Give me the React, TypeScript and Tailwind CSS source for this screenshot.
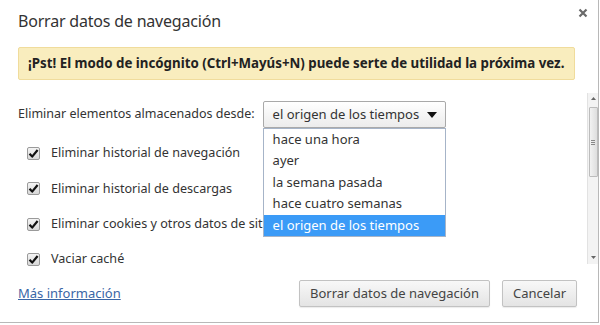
import React from 'react';

const options = ['hace una hora', 'ayer', 'la semana pasada', 'hace cuatro semanas', 'el origen de los tiempos'];

const items = [
  'Eliminar historial de navegación',
  'Eliminar historial de descargas',
  'Eliminar cookies y otros datos de sitios y complementos',
  'Vaciar caché',
];

const CheckBox: React.FC = () => (
  <span className="flex h-[13px] w-[13px] items-center justify-center rounded-[2px] border border-[#9a9a9a] bg-gradient-to-b from-[#f4f4f4] to-[#d8d8d8]">
    <svg width="11" height="11" viewBox="0 0 11 11">
      <path d="M1.5 5.8 L4.2 8.6 L9.6 2" fill="none" stroke="#111" strokeWidth="2.2" strokeLinejoin="round" />
    </svg>
  </span>
);

const App: React.FC = () => {
  return (
    <div className="h-[325px] w-[600px] overflow-hidden bg-white text-[#333] [font-family:'Noto_Sans',sans-serif]">
      <div className="flex h-[323px] w-[599px] flex-col border-r border-b border-[#b8b8b8]">
        <div className="flex items-start justify-between pt-[8px] pl-[18px] pr-[10px]">
          <h1 className="text-[16px] leading-[26px] tracking-[-0.2px] text-[#333]">Borrar datos de navegación</h1>
          <svg width="10" height="10" viewBox="0 0 10 10">
            <path d="M1.5 1.5 L8.5 8.5 M8.5 1.5 L1.5 8.5" stroke="#6a6a6a" strokeWidth="2.2" />
          </svg>
        </div>

        <div className="mx-[18px] mt-[13px] flex h-[33px] w-[557px] items-center whitespace-nowrap rounded-[2px] border border-[#f0dc9c] bg-[#f9edbe] pl-[9px] text-[13.3px] font-bold text-[#222]">
          ¡Pst! El modo de incógnito (Ctrl+Mayús+N) puede serte de utilidad la próxima vez.
        </div>

        <div className="mt-[13px] flex h-[171px]">
          <div className="flex-1 pl-[18px] pt-[8px]">
            <div className="flex items-center gap-[8px] text-[13px]">
              <span className="whitespace-nowrap text-[12.5px]">Eliminar elementos almacenados desde:</span>
              <div className="relative z-10">
                <div className="flex h-[27px] w-[183px] items-center justify-between rounded-[2px] border border-[#a9a9a9] bg-gradient-to-b from-[#ffffff] to-[#ececec] pl-[9px] pr-[8px]">
                  <span>el origen de los tiempos</span>
                  <svg width="10" height="6" viewBox="0 0 10 6">
                    <path d="M0 0 H10 L5 6 Z" fill="#111" />
                  </svg>
                </div>
                <ul className="absolute left-0 top-full w-[183px] border border-[#a6b4c8] bg-white">
                  {options.map((o, i) => (
                    <li
                      key={o}
                      className={`h-[21.4px] pl-[9px] leading-[21px] ${i === options.length - 1 ? 'bg-[#3b9bf7] text-white' : ''}`}
                    >
                      {o}
                    </li>
                  ))}
                </ul>
              </div>
            </div>

            <div className="mt-[8px] flex flex-col pl-[9px]">
              {items.map((label) => (
                <label key={label} className="flex h-[35.3px] items-center gap-[11px] whitespace-nowrap text-[12.6px]">
                  <CheckBox />
                  <span>{label}</span>
                </label>
              ))}
            </div>
          </div>

          <div className="flex w-[11px] flex-col items-center border-l border-[#e2e2e2] bg-[#f3f3f3]">
            <svg className="mt-[4px]" width="5" height="3" viewBox="0 0 5 3">
              <path d="M0 3 L2.5 0 L5 3 Z" fill="#666" />
            </svg>
            <div className="mt-[7px] flex h-[70px] w-[9px] flex-col items-center justify-center gap-[1px] rounded-[1px] border border-[#bcbcbc] bg-gradient-to-r from-[#f2f2f2] to-[#dedede]">
              <span className="h-px w-[4px] bg-[#888]" />
              <span className="h-px w-[4px] bg-[#888]" />
              <span className="h-px w-[4px] bg-[#888]" />
            </div>
            <div className="flex-1" />
            <svg className="mb-[5px]" width="5" height="3" viewBox="0 0 5 3">
              <path d="M0 0 H5 L2.5 3 Z" fill="#666" />
            </svg>
          </div>
        </div>

        <div className="mt-[16px] flex items-center justify-between pl-[18px] pr-[21px]">
          <a href="#" className="text-[13px] text-[#3a66a6] underline">Más información</a>
          <div className="flex gap-[12px]">
            <button className="h-[27px] w-[191px] rounded-[2px] border border-[#c2c2c2] bg-gradient-to-b from-[#f8f8f8] to-[#e4e4e4] text-[13px] text-[#444] shadow-[0_1px_1px_rgba(0,0,0,0.08)]">
              Borrar datos de navegación
            </button>
            <button className="h-[27px] w-[75px] rounded-[2px] border border-[#c2c2c2] bg-gradient-to-b from-[#f8f8f8] to-[#e4e4e4] text-[13px] text-[#444] shadow-[0_1px_1px_rgba(0,0,0,0.08)]">
              Cancelar
            </button>
          </div>
        </div>
      </div>
    </div>
  );
};

export default App;
